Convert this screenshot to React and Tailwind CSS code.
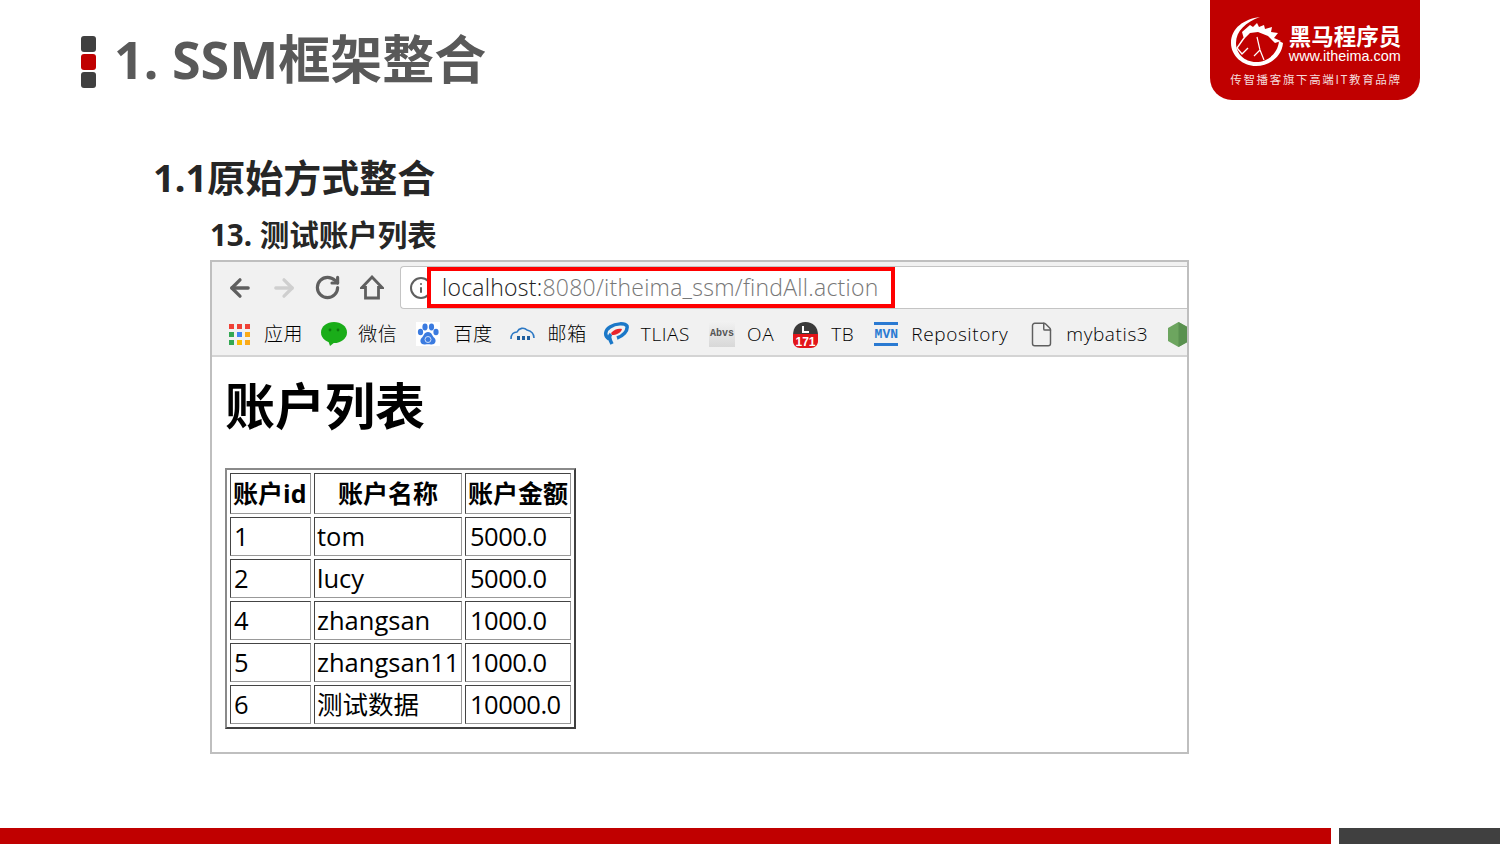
import { ArrowLeft, ArrowRight, RotateCw, Info, File } from 'lucide-react'

const accounts = [
  { id: '1', name: 'tom', money: '5000.0' },
  { id: '2', name: 'lucy', money: '5000.0' },
  { id: '4', name: 'zhangsan', money: '1000.0' },
  { id: '5', name: 'zhangsan11', money: '1000.0' },
  { id: '6', name: '测试数据', money: '10000.0' },
]

// Logo mark: ring, mane and thin face lines
function HorseLogo() {
  return (
    <svg width="52" height="50" viewBox="0 0 52 50" className="shrink-0">
      <path d="M29 0 C13 2 0 11 0 26 C0 39 12 49 25 49 C39 49 51 39 52 26 L48 24 C47 36 37 45 25 45 C13 45 5 36 5 26 C5 14 15 5 29 0 Z" fill="#fff" />
      <path d="M11 15 L19 8 L22 10 L26 6 L28 10 L33 8 L34 12 L41 10 L40 15 L47 16 L43 21 L50 24 L44 26 L37 19 L27 15 L19 16 L13 22 Z" fill="#fff" />
      <path d="M13 21 L6 31 L11 37 L17 31" stroke="#fff" strokeWidth="1.4" fill="none" />
      <path d="M26 20 L29 33 L33 43 M29 33 L23 39" stroke="#fff" strokeWidth="1.2" fill="none" />
    </svg>
  )
}

function HomeIcon() {
  return (
    <svg width="24" height="25" viewBox="0 0 24 25" className="shrink-0 ml-[19px]" fill="none">
      <path d="M12 2 L22 12.500 H18.500 V23 H5.500 V12.500 H2 Z" stroke="#5f5f5f" strokeWidth="2.800" strokeLinejoin="miter" />
    </svg>
  )
}

function AppsIcon() {
  const colors = ['#ef4136', '#ef4136', '#ef4136', '#34a853', '#4285f4', '#fbaa19', '#34a853', '#fbbc05', '#fbaa19']
  return (
    <div className="grid grid-cols-3 gap-[3px] w-[21px] h-[21px] shrink-0">
      {colors.map((c, i) => (
        <span key={i} className="w-[5px] h-[5px]" style={{ backgroundColor: c }} />
      ))}
    </div>
  )
}

function WechatIcon() {
  return (
    <svg width="26" height="24" viewBox="0 0 26 24" className="shrink-0">
      <ellipse cx="13" cy="10.5" rx="13" ry="10.5" fill="#1aad19" />
      <path d="M7 18 L9 24 L14 20 Z" fill="#1aad19" />
      <circle cx="9" cy="8" r="1.4" fill="#0d7a0d" />
      <circle cx="17" cy="8" r="1.4" fill="#0d7a0d" />
    </svg>
  )
}

function BaiduIcon() {
  return (
    <svg width="24" height="24" viewBox="0 0 24 24" className="shrink-0 bg-white">
      <ellipse cx="4.5" cy="10" rx="2.6" ry="3.2" fill="#3b7be0" />
      <ellipse cx="9" cy="5" rx="2.6" ry="3.4" fill="#3b7be0" />
      <ellipse cx="15.5" cy="5" rx="2.6" ry="3.4" fill="#3b7be0" />
      <ellipse cx="20" cy="10" rx="2.6" ry="3.2" fill="#3b7be0" />
      <path d="M12 10 C8 10 8 14 5.5 16 C3 19 5 23 9 22.5 C11 22 13 22 15 22.5 C19 23 21 19 18.500 16 C16 14 16 10 12 10 Z" fill="#3b7be0" />
      <circle cx="12" cy="17.500" r="3" fill="none" stroke="#cfe0fa" strokeWidth="1" />
    </svg>
  )
}

function MailIcon() {
  return (
    <svg width="25" height="16" viewBox="0 0 25 16" className="shrink-0" fill="none">
      <path d="M1 13 C1 8 4 6 7 6 C9 2 14 1 17 4 C21 5 24 8 24 12" stroke="#2c78c4" strokeWidth="1.6" />
      <rect x="7" y="10" width="3" height="4" fill="#1f5f9f" />
      <rect x="12" y="10" width="3" height="4" fill="#1f5f9f" />
      <rect x="17" y="10" width="3" height="4" fill="#1f5f9f" />
    </svg>
  )
}

function TliasIcon() {
  return (
    <svg width="26" height="24" viewBox="0 0 26 24" className="shrink-0" fill="none">
      <path d="M9 22 C6 16 6 14 8 12 M6 17 C1 14 2 8 7 5 C13 1 22 1 24 4 C25 9 20 14 14 16" stroke="#1b78c8" strokeWidth="3.500" />
      <path d="M8 11 C11 7 16 6 19 7 C18 11 13 13 9 13 Z" fill="#e8242c" />
    </svg>
  )
}

function AbvsIcon() {
  return (
    <div className="w-[26px] h-[26px] shrink-0 bg-gradient-to-b from-[#f2f2f2] to-[#d8d8d8] flex items-center justify-center font-['Liberation_Mono',monospace] font-bold text-[10px] text-[#555555] leading-none">
      Abvs
    </div>
  )
}

function BadgeIcon() {
  return (
    <svg width="27" height="27" viewBox="0 0 27 27" className="shrink-0">
      <path d="M1 14 C1 6 6 1 13.500 1 C21 1 26 6 26 14 Z" fill="#3a3a3a" />
      <path d="M11 5 V11 H17" stroke="#fff" strokeWidth="2" fill="none" />
      <path d="M1 13 H26 V20 C26 24 23 27 19 27 H8 C4 27 1 24 1 20 Z" fill="#e3151a" />
      <text x="13.500" y="24.500" textAnchor="middle" fontSize="12" fontWeight="700" fill="#fff" fontFamily="Liberation Sans, sans-serif">171</text>
    </svg>
  )
}

function MvnIcon() {
  return (
    <div className="w-[24px] h-[24px] shrink-0 flex flex-col justify-between">
      <span className="h-[3px] bg-[#2a7ad2]" />
      <span className="font-['Liberation_Mono',monospace] font-bold text-[13px] text-[#2a7ad2] leading-none text-center">MVN</span>
      <span className="h-[3px] bg-[#2a7ad2]" />
    </div>
  )
}

function NodeIcon() {
  return (
    <svg width="21" height="25" viewBox="0 0 21 25" className="shrink-0">
      <path d="M10.500 0 L21 6 V19 L10.500 25 L0 19 V6 Z" fill="#6da55f" />
      <path d="M10.500 0 L21 6 V19 L10.500 25 Z" fill="#5a9150" />
    </svg>
  )
}

function Bookmark({ icon, label, className }) {
  return (
    <div className={`flex items-center shrink-0 ${className}`}>
      {icon}
      {label && <span className="text-[19px] leading-none tracking-[0.6px] text-black whitespace-nowrap font-['Open_Sans','Noto_Sans_CJK_SC',sans-serif] font-light">{label}</span>}
    </div>
  )
}

export default function App() {
  const cell = 'border border-t-[#444444] border-l-[#444444] border-r-[#999999] border-b-[#999999] p-0 leading-none whitespace-nowrap'

  return (
    <div className="w-[1500px] h-[844px] overflow-hidden bg-white flex flex-col font-['Noto_Sans','Noto_Sans_CJK_SC',sans-serif]">

      {/* Header */}
      <div className="h-[100px] shrink-0 pl-[81px] pr-[80px] flex justify-between items-start">
        <div className="flex items-start gap-[18px] mt-[36px]">
          <div className="flex flex-col gap-[2px]">
            <span className="w-[15px] h-[16px] rounded-[3px] bg-[#404040]" />
            <span className="w-[15px] h-[16px] rounded-[3px] bg-[#c00000]" />
            <span className="w-[15px] h-[16px] rounded-[3px] bg-[#404040]" />
          </div>
          <h1 className="text-[52px] leading-[52px] -mt-[3px] font-bold text-[#595959] whitespace-nowrap">1. SSM框架整合</h1>
        </div>

        <div className="w-[210px] h-[100px] bg-[#c00000] rounded-b-[22px] flex flex-col items-center pt-[17px] pl-[2px]">
          <div className="flex items-center gap-[6px]">
            <HorseLogo />
            <div className="flex flex-col items-start text-white mt-[2px]">
              <span className="text-[22.5px] leading-[26px] font-bold font-['Noto_Sans_CJK_SC',sans-serif] whitespace-nowrap">黑马程序员</span>
              <span className="text-[14.4px] leading-[16px] font-['Liberation_Sans',sans-serif]">www.itheima.com</span>
            </div>
          </div>
          <div className="text-[11.5px] leading-[14px] mt-[5px] text-[#f5dcdc] tracking-[1.65px] whitespace-nowrap font-['Noto_Sans_CJK_SC',sans-serif]">传智播客旗下高端IT教育品牌</div>
        </div>
      </div>

      {/* Headings */}
      <h2 className="mt-[52px] ml-[153px] text-[38px] leading-[50px] font-bold text-[#262626] whitespace-nowrap">1.1原始方式整合</h2>
      <h3 className="mt-[15px] ml-[210px] text-[29.5px] leading-[36px] font-bold text-[#262626] whitespace-nowrap">13. 测试账户列表</h3>

      {/* Browser screenshot */}
      <div className="mt-[7px] ml-[210px] w-[979px] h-[494px] border-2 border-[#bfbfbf] flex flex-col overflow-hidden">
        <div className="h-[47px] shrink-0 bg-[#f1f1f1] flex items-center pl-[14px] pt-[4px]">
          <ArrowLeft size={28} strokeWidth={2.8} className="text-[#5f5f5f] shrink-0" />
          <ArrowRight size={28} strokeWidth={2.8} className="text-[#cfcfcf] shrink-0 ml-[16px]" />
          <RotateCw size={27} strokeWidth={2.8} className="text-[#5f5f5f] shrink-0 ml-[16px]" />
          <HomeIcon />
          <div className="ml-[16px] flex-1 h-[43px] bg-white border border-r-0 border-[#c4c4c4] rounded-l-[4px] flex items-center">
            <Info size={24} strokeWidth={2} className="text-[#5f5f5f] shrink-0 ml-[8px]" />
            <div className="ml-[-6px] relative z-10 w-[468px] shrink-0 h-[41px] border-[4px] border-[#ff0000] bg-white flex items-center pl-[11px] font-['Open_Sans',sans-serif] font-light text-[23px] tracking-[0.25px] whitespace-nowrap">
              <span className="text-[#222222]">localhost:</span>
              <span className="text-[#777777]">8080/itheima_ssm/findAll.action</span>
            </div>
          </div>
        </div>

        <div className="h-[48px] shrink-0 bg-[#f1f1f1] border-b-2 border-[#d4d4d4] flex items-center pl-[17px] pt-[4px] overflow-hidden">
          <Bookmark icon={<AppsIcon />} label="应用" className="gap-[14px]" />
          <Bookmark icon={<WechatIcon />} label="微信" className="gap-[11px] ml-[18px]" />
          <Bookmark icon={<BaiduIcon />} label="百度" className="gap-[13px] ml-[19px]" />
          <Bookmark icon={<MailIcon />} label="邮箱" className="gap-[13px] ml-[17px]" />
          <Bookmark icon={<TliasIcon />} label="TLIAS" className="gap-[12px] ml-[16px]" />
          <Bookmark icon={<AbvsIcon />} label="OA" className="gap-[12px] ml-[19px]" />
          <Bookmark icon={<BadgeIcon />} label="TB" className="gap-[12px] ml-[18px]" />
          <Bookmark icon={<MvnIcon />} label="Repository" className="gap-[13px] ml-[20px]" />
          <Bookmark icon={<File size={27} strokeWidth={1.3} className="text-[#5f5f5f]" />} label="mybatis3" className="gap-[11px] ml-[20px]" />
          <Bookmark icon={<NodeIcon />} className="ml-[20px]" />
        </div>

        {/* Page */}
        <div className="flex-1 bg-white pl-[13px]">
          <h1 className="mt-[16px] text-[50px] leading-[60px] font-bold text-black font-['Noto_Sans_CJK_SC',sans-serif]">账户列表</h1>
          <table className="mt-[35px] border-2 border-t-[#8a8a8a] border-l-[#8a8a8a] border-r-[#404040] border-b-[#404040] border-separate border-spacing-[3px] w-[351px] table-fixed text-black text-[25.5px] font-['Open_Sans','Noto_Sans_CJK_SC',sans-serif]">
            <colgroup>
              <col className="w-[81px]" />
              <col className="w-[148px]" />
              <col className="w-[106px]" />
            </colgroup>
            <thead>
              <tr className="h-[41px]">
                <th className={`${cell} pl-[2px] text-left font-bold text-[25px]`}>账户id</th>
                <th className={`${cell} text-center font-bold text-[25px]`}>账户名称</th>
                <th className={`${cell} text-center font-bold text-[25px]`}>账户金额</th>
              </tr>
            </thead>
            <tbody>
              {accounts.map((a) => (
                <tr key={a.id} className="h-[39px]">
                  <td className={`${cell} pl-[3px]`}>{a.id}</td>
                  <td className={`${cell} pl-[2px]`}>{a.name}</td>
                  <td className={`${cell} pl-[4px] tracking-[-0.5px]`}>{a.money}</td>
                </tr>
              ))}
            </tbody>
          </table>
        </div>
      </div>

      {/* Footer bar */}
      <div className="mt-auto h-[16px] shrink-0 flex gap-[8px]">
        <div className="w-[1331px] bg-[#c00000]" />
        <div className="flex-1 bg-[#404040]" />
      </div>
    </div>
  )
}
